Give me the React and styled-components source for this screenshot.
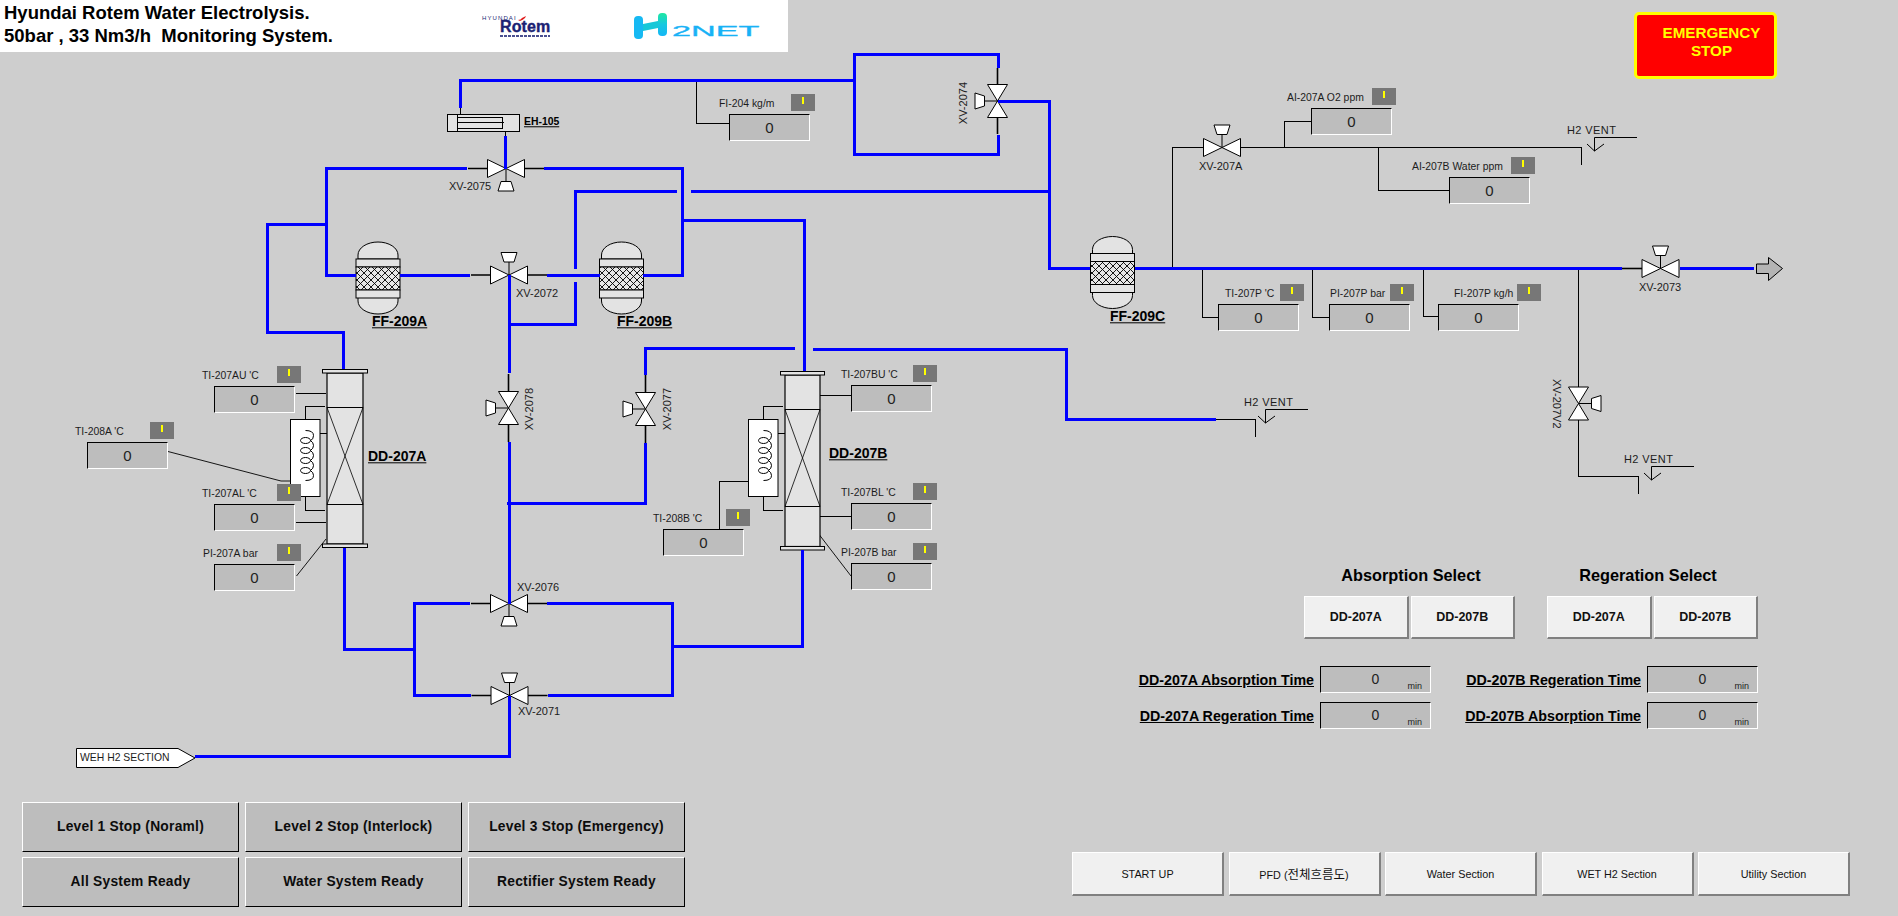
import styled, { createGlobalStyle } from "styled-components"

const GlobalStyle = createGlobalStyle`
  html, body {
    margin: 0;
    padding: 0;
    background: #cecece;
    font-family: "Liberation Sans", Arial, sans-serif;
    overflow: hidden;
  }
`

const Page = styled.div`
  position: relative;
  width: 1898px;
  height: 916px;
  display: flex;
  flex-direction: column;
  background: #cecece;
  color: #111;
`

/* ---------- top bar ---------- */

const TopBar = styled.header`
  position: relative;
  height: 78px;
  display: flex;
  justify-content: space-between;
  align-items: flex-start;
`

const Banner = styled.div`
  width: 788px;
  height: 52px;
  padding-left: 4px;
  box-sizing: border-box;
  display: flex;
  align-items: center;
  background: #fff;
`

const TitleBlock = styled.h1`
  width: 478px;
  margin: -5px 0 0;
  font-size: 18.5px;
  line-height: 23px;
  font-weight: 700;
  color: #000;
  white-space: pre;
`

const RotemLogo = styled.div`
  width: 152px;
  display: flex;
  flex-direction: column;
  color: #1b1f73;
  font-weight: 700;
`

const RotemMaker = styled.span`
  display: flex;
  align-items: center;
  gap: 1px;
  font-size: 6px;
  line-height: 6px;
  font-weight: 400;
  letter-spacing: 1.1px;
`

const RotemName = styled.span`
  margin-left: 18px;
  font-size: 16px;
  line-height: 12px;
  letter-spacing: .1px;
  font-weight: 700;
  -webkit-text-stroke: .4px #1b1f73;
`

const RotemTail = styled.span`
  margin: 2px 0 0 18px;
  width: 50px;
  height: 2px;
  background: repeating-linear-gradient(90deg, #4a4f90 0 3px, #fff 3px 4px);
`

const H2Logo = styled.div`
  display: flex;
  align-items: center;
`

const NetWord = styled.span`
  display: inline-block;
  margin-left: 4px;
  margin-top: 9px;
  font-size: 15px;
  line-height: 15px;
  color: #18b2f6;
  transform: scaleX(2.28);
  transform-origin: left center;
  -webkit-text-stroke: .3px #18b2f6;
`

const EmergencyButton = styled.button`
  width: 143px;
  height: 67px;
  margin: 12px 121px 0 0;
  padding: 0 0 8px 12px;
  box-sizing: border-box;
  border: 3px solid #ffff00;
  border-radius: 5px;
  background: #ff0000;
  color: #ffff00;
  font: 700 15.2px/17.5px "Liberation Sans", Arial, sans-serif;
`

/* ---------- free canvas of the P&ID ---------- */

const Canvas = styled.div`
  position: absolute;
  inset: 0;
`

const Drawing = styled.svg`
  position: absolute;
  left: 0;
  top: 0;
`

const Tag = styled.span`
  position: absolute;
  left: ${(p) => p.$x}px;
  top: ${(p) => p.$y}px;
  transform: translateY(-50%);
  font-size: ${(p) => p.$size || 11}px;
  line-height: 1;
  color: #1c1c1c;
  white-space: nowrap;
  letter-spacing: ${(p) => p.$spacing || 0}px;
`

const VerticalTag = styled.span`
  position: absolute;
  left: ${(p) => p.$x}px;
  top: ${(p) => p.$y}px;
  transform: translateX(-50%) ${(p) => (p.$up ? "rotate(180deg)" : "")};
  writing-mode: vertical-rl;
  font-size: 11px;
  line-height: 1;
  color: #1c1c1c;
  white-space: nowrap;
`

const EquipmentName = styled.span`
  position: absolute;
  left: ${(p) => p.$x}px;
  top: ${(p) => p.$y}px;
  transform: translateY(-50%);
  font-size: ${(p) => p.$size || 14}px;
  line-height: 1.1;
  font-weight: 700;
  color: #000;
  text-decoration: underline;
  white-space: nowrap;
`

const Readout = styled.div`
  position: absolute;
  left: ${(p) => p.$x}px;
  top: ${(p) => p.$y}px;
  width: 81px;
  height: 27px;
  box-sizing: border-box;
  display: flex;
  align-items: center;
  justify-content: center;
  background: #bdbdbd;
  border-style: solid;
  border-width: 1px;
  border-color: #000 #fff #fff #000;
  font-size: 15px;
  color: #222;
`

const ReadoutLabel = styled.span`
  position: absolute;
  left: ${(p) => p.$x}px;
  top: -18px;
  font-size: 10.4px;
  line-height: 14px;
  color: #1c1c1c;
  white-space: nowrap;
`

const AlarmBadge = styled.span`
  position: absolute;
  left: ${(p) => p.$x}px;
  top: -21px;
  width: 24px;
  height: 17px;
  padding-top: 3px;
  box-sizing: border-box;
  display: flex;
  justify-content: center;
  background: #777;
  &::after {
    content: "";
    width: 2px;
    height: 7px;
    background: #ffff00;
  }
`

/* ---------- lower panels (plain flow) ---------- */

const ControlPanel = styled.section`
  width: 628px;
  margin: 488px 0 0 1130px;
  display: flex;
  flex-direction: column;
`

const SelectRow = styled.div`
  display: flex;
  justify-content: flex-end;
  gap: 32px;
`

const SelectGroup = styled.div`
  width: 211px;
  display: flex;
  flex-direction: column;
`

const SelectTitle = styled.h2`
  margin: 0 0 12px;
  padding: 0 ${(p) => p.$pad || 0}px 0 ${(p) => p.$padLeft || 0}px;
  font-size: 16.3px;
  line-height: 18px;
  font-weight: 700;
  text-align: center;
  color: #000;
`

const SelectButtons = styled.div`
  display: flex;
  gap: 2px;
`

const RaisedButton = styled.button`
  flex: 1 1 0;
  height: ${(p) => p.$height || 43}px;
  padding: 0;
  box-sizing: border-box;
  border-style: solid;
  border-width: 1px 2px 2px 1px;
  border-color: #fff #808080 #808080 #fff;
  background: #f0f0f0;
  color: #111;
  font: ${(p) => (p.$small ? "400 10.8px" : "700 12.5px")} "Liberation Sans", "Noto Sans CJK KR", sans-serif;
`

const Hangul = styled.span`
  font-size: 12.5px;
`

const TimeGrid = styled.div`
  margin-top: 27px;
  display: grid;
  grid-template-columns: 294px 294px;
  justify-content: end;
  column-gap: 33px;
  row-gap: 9px;
`

const TimeRow = styled.div`
  display: flex;
  justify-content: flex-end;
  align-items: center;
  gap: 6px;
`

const TimeLabel = styled.span`
  font-size: 14.25px;
  font-weight: 700;
  text-decoration: underline;
  color: #000;
  white-space: nowrap;
`

const TimeBox = styled.div`
  width: 111px;
  height: 27px;
  flex: none;
  box-sizing: border-box;
  display: grid;
  background: #bdbdbd;
  border-style: solid;
  border-width: 1px;
  border-color: #000 #fff #fff #000;
  & > * {
    grid-area: 1 / 1;
  }
`

const TimeValue = styled.span`
  justify-self: center;
  margin-top: 4px;
  font-size: 14px;
  line-height: 16px;
  color: #222;
`

const TimeUnit = styled.span`
  justify-self: end;
  align-self: end;
  margin: 0 8px 1px 0;
  font-size: 9px;
  line-height: 10px;
  color: #222;
`

const BottomRow = styled.footer`
  margin-top: auto;
  padding: 0 48px 9px 22px;
  display: flex;
  justify-content: space-between;
  align-items: flex-end;
`

const LevelGrid = styled.div`
  display: grid;
  grid-template-columns: repeat(3, 217px);
  grid-auto-rows: 50px;
  gap: 5px 6px;
`

const LevelButton = styled.button`
  padding: 0 0 2px;
  box-sizing: border-box;
  border-style: solid;
  border-width: 1px;
  border-color: #fff #000 #000 #fff;
  background: #bdbdbd;
  color: #0c0c0c;
  font: 700 13.8px "Liberation Sans", Arial, sans-serif;
  letter-spacing: .25px;
`

const NavBar = styled.nav`
  margin-bottom: 11px;
  display: flex;
  gap: 4.5px;
`

const NavItem = styled.div`
  width: 152px;
  display: flex;
`

/* ---------- drawing parts ---------- */

const BLUE = "#0000ff"

const bluePipes = [
  "460.5,108 460.5,80.5 854,80.5",
  "998,68 998,54.5 854.5,54.5 854.5,154.5 998,154.5 998,135",
  "998,101 1049.5,101 1049.5,268.5 1090,268.5",
  "691,191.5 1049.5,191.5",
  "575.5,269 575.5,191.5 677,191.5",
  "575.5,282 575.5,324.5 509,324.5",
  "505.5,136 505.5,168.5",
  "467,168.5 326.5,168.5 326.5,275 356,275",
  "544,168.5 682.5,168.5 682.5,275 643,275",
  "400,275 470,275",
  "547,275 599.5,275",
  "326.5,224.5 267.5,224.5 267.5,332.5 343.5,332.5 343.5,369",
  "682.5,220.5 804.5,220.5 804.5,371",
  "509,275 509,373",
  "509,442 509,604",
  "507,503.5 645.5,503.5 645.5,443",
  "645.5,375 645.5,348.5 795,348.5",
  "813,349.5 1066,349.5 1066,419.5 1216,419.5",
  "344,548 344,649.5 415,649.5",
  "470,603.5 414.5,603.5 414.5,695.5 471,695.5",
  "547,603.5 672.5,603.5 672.5,695.5 548,695.5",
  "672.5,646.5 802,646.5 802,550",
  "509.5,695.5 509.5,756.5 195,756.5",
  "1135,268.5 1622,268.5",
  "1680,268.5 1754,268.5",
]

const thinLines = [
  "460.5,108 460.5,114",
  "505.5,132 505.5,136",
  "696.5,80 696.5,123.5 729,123.5",
  "296,393.5 326,393.5",
  "296,522.5 326,522.5",
  "305.5,430 305.5,406 325,406",
  "305.5,483 305.5,510.5 325,510.5",
  "320,433.5 328.5,433.5",
  "763.5,430 763.5,406 783,406",
  "763.5,483 763.5,510.5 783,510.5",
  "778,433.5 786.5,433.5",
  "748,481.5 719.5,481.5 719.5,529",
  "820,395.5 851,395.5",
  "820,516.5 851,516.5",
  "1172.5,268 1172.5,147.5 1203,147.5",
  "1240,147.5 1581.5,147.5 1581.5,165",
  "1284.5,147 1284.5,121.5 1311,121.5",
  "1378.5,147 1378.5,190.5 1450,190.5",
  "1202.5,268 1202.5,317.5 1218,317.5",
  "1312.5,268 1312.5,317.5 1329,317.5",
  "1423.5,268 1423.5,316.5 1438,316.5",
  "1578.5,268 1578.5,387",
  "1578.5,420 1578.5,476.5 1638.5,476.5 1638.5,494",
  "1216,419.5 1255.5,419.5 1255.5,437",
]

const slantedLines = [
  "168,451.5 281,481 290,481",
  "296.5,576 326,539",
  "819.5,535 851,576",
]

const Valve = ({ x, y, turn = 0, len = 18.5, half = 9, stub = 0, single = false, stem = 13 }) => (
  <g transform={`translate(${x} ${y}) rotate(${turn})`}>
    {stub > 0 && (
      <path d={single ? `M${-stub} 0H${-len}` : `M${-stub} 0H${-len}M${len} 0H${stub}`} stroke="#000" strokeWidth="1.6" />
    )}
    <path d={`M0 0V${-stem}`} stroke="#000" strokeWidth="1" />
    <path
      d={`M-5 ${-stem} L-8 ${-stem - 9.5} H8 L5 ${-stem} Z`}
      fill="#fff"
      stroke="#000"
      strokeWidth="1"
    />
    <path
      d={`M${-len} ${-half} L0 0 L${-len} ${half} Z M${len} ${-half} L0 0 L${len} ${half} Z`}
      fill="#fff"
      stroke="#000"
      strokeWidth="1"
    />
  </g>
)

const Vessel = ({ x, y }) => (
  <g stroke="#000" strokeWidth="1">
    <path d={`M${x + 2} ${y + 17} V${y + 13} A20 13 0 0 1 ${x + 42} ${y + 13} V${y + 17} Z`} fill="#e3e3e3" />
    <path d={`M${x + 2} ${y + 55} V${y + 59} A20 13 0 0 0 ${x + 42} ${y + 59} V${y + 55} Z`} fill="#e3e3e3" />
    <rect x={x} y={y + 17} width="44" height="8" fill="#e3e3e3" />
    <rect x={x} y={y + 25} width="44" height="23" fill="url(#crosshatch)" />
    <rect x={x} y={y + 48} width="44" height="8" fill="#e3e3e3" />
  </g>
)

const Column = ({ x, y, w, h, upper, lower }) => (
  <g stroke="#000" strokeWidth="1">
    <rect x={x} y={y} width={w} height={h} fill="#e3e3e3" strokeWidth="1.2" />
    <rect x={x - 4.5} y={y - 3.5} width={w + 9} height="3.5" fill="#e3e3e3" />
    <rect x={x - 4.5} y={y + h} width={w + 9} height="3.5" fill="#e3e3e3" />
    <path d={`M${x} ${upper}H${x + w}M${x} ${lower}H${x + w}`} fill="none" />
    <path d={`M${x} ${upper}L${x + w} ${lower}M${x + w} ${upper}L${x} ${lower}`} fill="none" strokeWidth=".8" />
  </g>
)

const Heater = ({ x, y }) => (
  <g fill="none" stroke="#000" strokeWidth="1">
    <rect x={x} y={y} width="29.5" height="77" fill="#fff" />
    <path
      d={`M${x + 15} ${y + 11} q8 0 8 5 q0 4 -3 5 q3 2 3 5 q0 3 -3 5 q3 2 3 5 q0 3 -3 5 q3 2 3 5 q0 3 -3 5 q3 2 3 5 q0 5 -8 5`}
    />
    {[21, 31, 41, 51].map((dy) => (
      <ellipse key={dy} cx={x + 15} cy={y + dy} rx="5" ry="3" />
    ))}
  </g>
)

const Vent = ({ x, y }) => (
  <path
    d={`M${x + 43} ${y + 0.5}H${x + 0.5}V${y + 14}M${x - 7} ${y + 7}L${x + 0.5} ${y + 14}L${x + 10} ${y + 7}`}
    fill="none"
    stroke="#000"
    strokeWidth="1"
  />
)

const H2Mark = () => (
  <svg width="34" height="26" viewBox="0 0 34 26">
    <defs>
      <linearGradient id="h2fade" x1="0" y1="0" x2="0" y2="1">
        <stop offset="0" stopColor="#1fe8a2" />
        <stop offset=".5" stopColor="#17c8e0" />
        <stop offset="1" stopColor="#14b6f6" />
      </linearGradient>
    </defs>
    <rect x="0" y="3" width="9" height="23" rx="4" fill="#16b9f3" />
    <path d="M9 11 L24 8 V15 L9 18 Z" fill="#18c8d8" />
    <rect x="24" y="0" width="9" height="23" rx="4" fill="url(#h2fade)" />
  </svg>
)

const readouts = [
  { name: "FI-204 kg/m", x: 729, y: 114, lx: -11, bx: 61 },
  { name: "TI-207AU 'C", x: 214, y: 386, lx: -13, bx: 62 },
  { name: "TI-208A 'C", x: 87, y: 442, lx: -13, bx: 62 },
  { name: "TI-207AL 'C", x: 214, y: 504, lx: -13, bx: 62 },
  { name: "PI-207A bar", x: 214, y: 564, lx: -12, bx: 62 },
  { name: "TI-207BU 'C", x: 851, y: 385, lx: -11, bx: 61 },
  { name: "TI-207BL 'C", x: 851, y: 503, lx: -11, bx: 61 },
  { name: "PI-207B bar", x: 851, y: 563, lx: -11, bx: 61 },
  { name: "TI-208B 'C", x: 663, y: 529, lx: -11, bx: 62 },
  { name: "AI-207A O2 ppm", x: 1311, y: 108, lx: -25, bx: 60 },
  { name: "AI-207B Water ppm", x: 1449, y: 177, lx: -38, bx: 61 },
  { name: "TI-207P 'C", x: 1218, y: 304, lx: 6, bx: 61 },
  { name: "PI-207P bar", x: 1329, y: 304, lx: 0, bx: 60 },
  { name: "FI-207P kg/h", x: 1438, y: 304, lx: 15, bx: 78 },
]

const valveTags = [
  ["XV-2075", 449, 186],
  ["XV-2072", 516, 293],
  ["XV-2076", 517, 587],
  ["XV-2071", 518, 711],
  ["XV-207A", 1199, 166],
  ["XV-2073", 1639, 287],
]

const levelButtons = [
  "Level 1 Stop (Noraml)",
  "Level 2 Stop (Interlock)",
  "Level 3 Stop (Emergency)",
  "All System Ready",
  "Water System Ready",
  "Rectifier System Ready",
]

const timeRows = [
  "DD-207A Absorption Time",
  "DD-207B Regeration Time",
  "DD-207A Regeration Time",
  "DD-207B Absorption Time",
]

const Poly = ({ points, ...rest }) => <polyline points={points} fill="none" {...rest} />

const Diagram = () => (
  <Canvas>
    <Drawing width="1898" height="916" viewBox="0 0 1898 916">
      <defs>
        <pattern id="crosshatch" width="7" height="7" patternUnits="userSpaceOnUse">
          <rect width="7" height="7" fill="#e6e6e6" />
          <path d="M-1 1L1 -1M0 7L7 0M6 8L8 6M-1 6L1 8M0 0L7 7M6 -1L8 1" stroke="#000" strokeWidth=".9" />
        </pattern>
      </defs>

      <g shapeRendering="crispEdges">
        {thinLines.map((p) => (
          <Poly key={p} points={p} stroke="#000" strokeWidth="1" />
        ))}
      </g>
      {slantedLines.map((p) => (
        <Poly key={p} points={p} stroke="#000" strokeWidth=".9" />
      ))}

      <Vessel x={356} y={242} />
      <Vessel x={599.5} y={242} />
      <Vessel x={1090.5} y={236.5} />

      <Column x={327} y={373} w={36} h={171} upper={407.5} lower={504.5} />
      <Column x={785} y={375} w={35} h={171.5} upper={409.5} lower={506.5} />
      <Heater x={290.5} y={419.5} />
      <Heater x={748.5} y={419.5} />

      <g stroke="#000" strokeWidth="1" fill="#e3e3e3">
        <rect x="447.5" y="114.5" width="72" height="17" />
        <path d="M457.5 114.5V131.5" />
        <rect x="457.5" y="117.5" width="45" height="11" fill="none" />
        <path d="M457.5 122.5H504" fill="none" />
      </g>

      <Valve x={506} y={168.5} turn={180} stub={38} />
      <Valve x={509} y={275} stub={38} />
      <Valve x={509} y={603.5} turn={180} stub={38} />
      <Valve x={509.5} y={695.5} stub={38} />
      <Valve x={1222} y={147.5} />
      <Valve x={1660.5} y={268.5} stub={38.5} single />
      <Valve x={997.5} y={101} turn={-90} len={16.5} half={10} stub={33} />
      <Valve x={508.5} y={408} turn={-90} len={16.5} half={10} stub={34} />
      <Valve x={645.5} y={409} turn={-90} len={16.5} half={10} stub={34} />
      <Valve x={1578.5} y={403.5} turn={90} len={16.5} half={10} />

      {bluePipes.map((p) => (
        <Poly key={p} points={p} stroke={BLUE} strokeWidth="3" shapeRendering="crispEdges" />
      ))}

      <Vent x={1594} y={137} />
      <Vent x={1651} y={466} />
      <Vent x={1265} y={409} />

      <polygon
        points="1756.5,264 1768.5,264 1768.5,257.5 1782.5,268.5 1768.5,280.5 1768.5,273.5 1756.5,273.5"
        fill="#b4b4b4"
        stroke="#000"
        strokeWidth="1"
      />
      <polygon points="76.5,748.5 178,748.5 195,758 178,767.5 76.5,767.5" fill="#fff" stroke="#000" strokeWidth="1" />
    </Drawing>

    <Tag $x={80} $y={758} $size={10.4}>WEH H2 SECTION</Tag>

    {valveTags.map(([name, x, y]) => (
      <Tag key={name} $x={x} $y={y}>{name}</Tag>
    ))}
    <VerticalTag $x={528.5} $y={388} $up>XV-2078</VerticalTag>
    <VerticalTag $x={667} $y={388} $up>XV-2077</VerticalTag>
    <VerticalTag $x={962.5} $y={82} $up>XV-2074</VerticalTag>
    <VerticalTag $x={1556} $y={379}>XV-207V2</VerticalTag>

    <Tag $x={1567} $y={130} $spacing={0.4}>H2 VENT</Tag>
    <Tag $x={1244} $y={402} $spacing={0.4}>H2 VENT</Tag>
    <Tag $x={1624} $y={459} $spacing={0.4}>H2 VENT</Tag>

    <EquipmentName $x={524} $y={122} $size={10.4}>EH-105</EquipmentName>
    <EquipmentName $x={372} $y={322}>FF-209A</EquipmentName>
    <EquipmentName $x={617} $y={322}>FF-209B</EquipmentName>
    <EquipmentName $x={1110} $y={317}>FF-209C</EquipmentName>
    <EquipmentName $x={368} $y={457}>DD-207A</EquipmentName>
    <EquipmentName $x={829} $y={454}>DD-207B</EquipmentName>

    {readouts.map((r) => (
      <Readout key={r.name} $x={r.x} $y={r.y}>
        <ReadoutLabel $x={r.lx}>{r.name}</ReadoutLabel>
        <AlarmBadge $x={r.bx} />
        0
      </Readout>
    ))}
  </Canvas>
)

const App = () => {
  return (
    <Page>
      <GlobalStyle />
      <Diagram />

      <TopBar>
        <Banner>
          <TitleBlock>
            {"Hyundai Rotem Water Electrolysis.\n50bar , 33 Nm3/h  Monitoring System."}
          </TitleBlock>
          <RotemLogo>
            <RotemMaker>
              HYUNDAI
              <svg width="8" height="5" viewBox="0 0 8 5">
                <path d="M0 4 Q3 4 4 2 L8 0 L7 2 Q5 4 2 5 Z" fill="#e01a1a" />
              </svg>
            </RotemMaker>
            <RotemName>Rotem</RotemName>
            <RotemTail />
          </RotemLogo>
          <H2Logo>
            <H2Mark />
            <NetWord>2NET</NetWord>
          </H2Logo>
        </Banner>
        <EmergencyButton>EMERGENCY<br />STOP</EmergencyButton>
      </TopBar>

      <ControlPanel>
        <SelectRow>
          <SelectGroup>
            <SelectTitle $padLeft={3}>Absorption Select</SelectTitle>
            <SelectButtons>
              <RaisedButton>DD-207A</RaisedButton>
              <RaisedButton>DD-207B</RaisedButton>
            </SelectButtons>
          </SelectGroup>
          <SelectGroup>
            <SelectTitle $pad={9}>Regeration Select</SelectTitle>
            <SelectButtons>
              <RaisedButton>DD-207A</RaisedButton>
              <RaisedButton>DD-207B</RaisedButton>
            </SelectButtons>
          </SelectGroup>
        </SelectRow>

        <TimeGrid>
          {timeRows.map((label) => (
            <TimeRow key={label}>
              <TimeLabel>{label}</TimeLabel>
              <TimeBox>
                <TimeValue>0</TimeValue>
                <TimeUnit>min</TimeUnit>
              </TimeBox>
            </TimeRow>
          ))}
        </TimeGrid>
      </ControlPanel>

      <BottomRow>
        <LevelGrid>
          {levelButtons.map((label) => (
            <LevelButton key={label}>{label}</LevelButton>
          ))}
        </LevelGrid>
        <NavBar>
          <NavItem><RaisedButton $small $height={44}>START UP</RaisedButton></NavItem>
          <NavItem><RaisedButton $small $height={44}>PFD (<Hangul>전체흐름도</Hangul>)</RaisedButton></NavItem>
          <NavItem><RaisedButton $small $height={44}>Water Section</RaisedButton></NavItem>
          <NavItem><RaisedButton $small $height={44}>WET H2 Section</RaisedButton></NavItem>
          <NavItem><RaisedButton $small $height={44}>Utility Section</RaisedButton></NavItem>
        </NavBar>
      </BottomRow>
    </Page>
  )
}

export default App
